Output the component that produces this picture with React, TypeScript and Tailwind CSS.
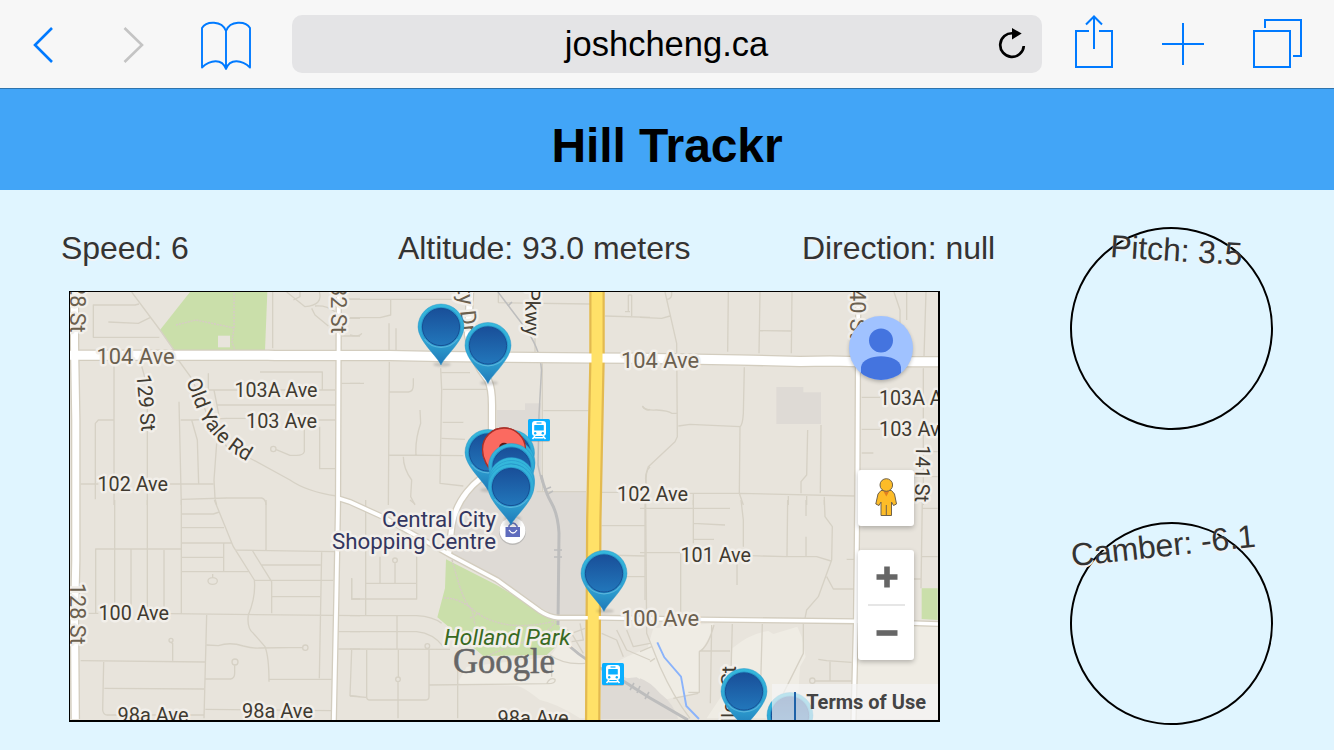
import React from "react";

/* ---------- Browser toolbar ---------- */

function Toolbar() {
  return (
    <div className="flex h-[89px] items-start border-b border-[#2f74ad] bg-[#f7f7f7]">
      <svg className="h-[88px] w-[292px] shrink-0" viewBox="0 0 292 88" fill="none">
        <path d="M52 28 L35 45 L52 62" stroke="#007aff" strokeWidth="2.6" />
        <path d="M124.500 28 L142 45 L124.500 62" stroke="#c4c4c4" strokeWidth="2.6" />
        <path
          d="M226 69 V31 C222 20 206 21 202 28 V67.500 C210 60 222 58 226 69 C230 58 242 60 250 67.500 V28 C246 21 230 20 226 31"
          stroke="#007aff"
          strokeWidth="1.9"
          strokeLinejoin="round"
        />
      </svg>
      <div className="mt-[15px] flex h-[58px] w-[750px] shrink-0 items-center rounded-[10px] bg-[#e4e4e6]">
        <div className="w-[52px]" />
        <div className="flex-1 pl-[1px] text-center text-[34.500px] leading-[58px] text-black">joshcheng.ca</div>
        <svg className="h-[58px] w-[54px]" viewBox="988 15 54 58" fill="none">
          <path d="M1023.800 46 A11.800 11.800 0 1 1 1013 33.300" stroke="#000" strokeWidth="2.700" />
          <path d="M1012 28 L1021.700 33.500 L1012 39.500 Z" fill="#000" />
        </svg>
      </div>
      <svg className="h-[88px] w-[292px] shrink-0" viewBox="1042 0 292 88" fill="none" stroke="#007aff" strokeWidth="2">
        <path d="M1089 31 H1076 V67 H1112 V31 H1099 M1094 49 V17 M1086 24.500 L1094 16.500 L1102 24.500" />
        <path d="M1162 44 H1204 M1183 23 V65" />
        <path d="M1254 31 H1290 V67 H1254 Z M1265 28 V20 H1301 V56 H1293" />
      </svg>
    </div>
  );
}

/* ---------- Map data, one entry per tile, in tile units (3 per pixel) ---------- */

type Tile = { x: number; y: number; areas: [string, string][]; roads: string };

const BUILT = "#dedad5";
const LIGHT = "#efece4";
const PARK = "#cadfaa";

const tiles: Tile[] = [
  {
    x: 60, y: 280,
    areas: [
      [PARK, "M390 36 H622 L615 212 H342 L300 150 Z"],
      ["#e8e4dc", "M474 167 H510 V202 H474 Z"],
    ],
    roads:
      "M215 36 L300 150 L345 215 M355 240 L395 295 L440 400 L500 500 L580 540 L690 600 Q740 635 830 648 M237 72 L225 75 H100 V172 H298 M145 126 L235 130 L270 113 M638 36 V205 M680 36 L735 80 Q790 75 778 36 M700 60 L720 50 V36 M755 85 L765 105 L805 138 M765 78 Q800 75 825 95 M845 57 H900 M840 115 H900 M845 168 H900 M845 310 H900 M162 245 V675 M240 240 L262 320 V675 M600 276 H787 V330 M440 330 H825 M445 280 V330 M462 330 L478 412 M470 375 H825 M362 420 H400 L500 415 H560 M770 420 H825 M357 365 L364 675 M395 420 L412 480 L416 612 M470 490 L462 600 L465 655 L470 675 M733 440 V515 Q730 526 710 526 H690 L647 508 M632 507 a8 8 0 1 0 16 0 a8 8 0 1 0 -16 0 M779 440 V566 H825 M160 420 H115 L106 430 V658 M62 612 H115 M330 612 H460 M365 658 L500 654 H605 Q618 658 618 675",
  },
  {
    x: 350, y: 280,
    areas: [[BUILT, "M440 390 H525 V370 H573 V635 H708 V675 H320 L400 580 L440 540 Z"]],
    roads:
      "M0 58 H320 M0 113 H90 L122 105 V58 M445 68 L720 72 M445 36 V68 M0 165 Q30 172 35 160 M117 130 V210 M138 145 V210 M555 170 V220 M835 45 V95 M845 45 H835 M845 45 V108 M825 95 H840 M765 108 L900 112 M118 245 L115 675 M0 310 H42 M118 336 H175 Q190 335 190 315 V295 M272 265 L275 330 L270 610 L340 618 M275 278 H360 M278 328 H415 M278 427 H340 M275 475 L345 478 M117 525 L340 527 M210 390 L212 430 Q195 480 198 525 M160 530 Q160 565 185 600 L182 650 L195 675 M577 250 V635 M580 392 H715 M560 635 H708 M755 637 H805 M877 378 Q890 395 900 388 M900 560 Q880 580 890 620",
  },
  {
    x: 640, y: 280,
    areas: [[BUILT, "M409 321 H490 V337 H543 V432 H409 Z"]],
    roads:
      "M75 36 L110 190 L112 470 L105 485 L25 560 Q18 575 18 610 M95 36 Q97 58 80 58 M0 112 L65 115 L90 108 M265 36 L263 215 M360 36 L357 220 M456 36 L454 220 M357 152 L454 153 M313 262 L310 400 Q308 435 300 440 L298 640 L310 675 M115 438 L150 433 L300 440 M8 380 Q15 392 50 390 Q85 392 95 400 H110 M503 450 L500 585 L483 605 V640 M543 435 L541 640 M145 640 H300 L645 648 M160 640 V675 M445 648 V675 M500 648 V675 M553 650 V675 M665 352 H720 M665 448 H720 M665 519 H700 M762 36 L780 90 V200 M800 36 V120 M858 36 L852 230 M850 265 V675 M820 590 H893 M880 515 H893",
  },
  {
    x: 60, y: 500,
    areas: [],
    roads:
      "M164 0 V338 M262 0 V338 M364 0 V340 M107 338 V147 H362 M213 147 V338 M312 150 V338 M365 42 H460 L478 36 M365 83 H492 M365 129 H515 M365 172 H492 M365 215 H565 M491 129 V215 M458 222 V233 M444 243 a14 10 0 1 0 28 0 a14 10 0 1 0 -28 0 M463 0 L520 140 L583 240 Q588 290 565 345 Q560 385 580 400 L615 440 Q627 470 627 545 M627 538 H815 M618 0 V150 M525 150 L825 155 M578 153 L635 245 V340 M605 195 H782 M785 155 L778 535 M583 241 H820 M637 290 H780 M62 340 H115 M330 341 L900 347 M440 345 L432 655 M440 435 L475 437 Q510 425 550 438 Q580 446 600 444 L727 442 M728 443 a8 8 0 1 0 16 0 a8 8 0 1 0 -16 0 M338 482 V430 L333 428 M327 421 a6 6 0 1 0 12 0 a6 6 0 1 0 -12 0 M62 482 L436 486 M437 537 H512 Q524 535 524 520 V497 M516 486 a9 9 0 1 0 18 0 a9 9 0 1 0 -18 0 M131 486 L128 630 Q130 645 142 645 H432 M133 565 L432 567 M436 628 L815 632 M835 395 H900 M835 447 H900 M875 235 V297 H900 M875 450 L870 587 L900 590",
  },
  {
    x: 350, y: 500,
    areas: [
      [BUILT, "M340 0 H708 V350 H620 L440 250 L298 160 L305 60 Z"],
      [LIGHT, "M325 545 L350 500 L600 470 L640 415 L705 470 V655 H690 Q620 610 570 600 Q520 560 500 557 L330 552 Z"],
      [PARK, "M288 178 L440 255 L600 350 L625 365 L640 420 L590 465 L400 468 L262 352 L285 265 Z"],
      [LIGHT, "M770 500 L830 470 L900 440 V560 L840 540 Z"],
      [BUILT, "M752 500 L830 535 L860 532 L900 555 V657 H752 Z"],
    ],
    roads:
      "M5 235 V297 H200 V170 M47 0 V345 M90 170 V250 M135 190 V250 M47 250 H200 M128 181 a7 7 0 1 0 14 0 a7 7 0 1 0 -14 0 M180 0 L195 12 M0 347 H200 Q250 350 275 370 M0 395 H200 Q250 400 280 440 M0 447 L300 448 M141 348 V447 M145 530 V447 M137 538 a7 7 0 1 0 14 0 a7 7 0 1 0 -14 0 M144 545 V655 M50 448 V590 Q50 600 60 600 H225 Q237 600 237 590 V450 M0 588 L48 592 M323 495 V655 M237 555 L590 551 Q600 530 615 538 Q618 552 590 551 M605 530 V490 M225 438 a7 7 0 1 0 14 0 a7 7 0 1 0 -14 0 M755 77 H885 M755 165 L885 168 M885 0 V300 M755 230 H885 M640 380 L665 400 L700 460 M665 400 L705 385 M690 370 L700 420 L665 425 M800 390 L830 450 L900 480 M755 400 L800 420 L820 470 M830 390 L850 440 L900 430 M600 465 Q640 495 705 490",
  },
  {
    x: 640, y: 500,
    areas: [
      [LIGHT, "M40 385 L222 370 Q205 430 178 455 V575 L70 600 L25 570 L0 520 Z"],
      [LIGHT, "M277 445 Q330 400 385 393 L400 402 L472 380 L485 410 L497 470 L480 500 L470 655 H200 L270 550 Z"],
      [LIGHT, "M652 372 L893 378 V657 H645 Z"],
      [PARK, "M845 265 H893 V360 L845 357 Z"],
      [BUILT, "M0 535 Q30 545 60 580 Q100 610 115 657 H0 Z"],
    ],
    roads:
      "M0 25 H270 M160 0 V130 M160 70 L255 75 M160 118 H222 M17 0 L20 400 L60 500 Q100 590 150 655 M0 158 H120 M330 167 L440 170 H530 L573 183 M122 160 V335 M291 190 V255 M303 0 L310 60 V140 M443 0 L441 168 M498 0 V48 M498 110 V168 M553 0 L555 50 L577 80 L575 180 L535 290 L500 330 L495 355 M560 230 L580 267 H645 M620 178 H645 M215 375 L211 610 M277 372 L273 520 M367 372 L362 550 M490 372 V460 L430 580 M178 453 H270 M222 375 Q205 440 178 455 V577 H145 M100 595 L175 580 M0 455 L35 440 M30 485 L45 475 M535 478 L560 482 L635 487 M570 485 V543 M525 543 H638 M509 542 a8 8 0 1 0 16 0 a8 8 0 1 0 -16 0 M822 237 H843 M847 0 L843 265 M845 25 H893 M845 170 H893",
  },
];

const mainRoads: [string, number][] = [
  ["M70 355.300 H268 L275 355.500 H390 L440 356.500 L590 358 L640 358.300 L740 360 L800 361.500 L830 361 L860 361.800 H938", 9],
  ["M74.500 292 V345 L75.800 420 V560 L74.500 620 L75.300 719", 7],
  ["M338.800 292 L338 505 L336.300 600 L333.800 720", 3.8],
  ["M858.300 292 L857.300 500 L856 620 L853.500 720", 3.8],
  ["M337.500 498 L350 502 L383 517 L450 555 L497 580 L540 611 Q549 617 558 617.700 H600 L700 619.500 L857 621.300 L938 624", 3.6],
  ["M470 292 L468 335 Q472 360 488 380 Q492 388 492 405 V440", 6],
  ["M494 470 C474 480 456 500 452 525 L448.500 555", 5],
];

const highway = "M597 292 V360 L593.800 520 L592.700 720";

/* ---------- Map symbols ---------- */

function Pin({ x, y }: { x: number; y: number }) {
  return (
    <g transform={`translate(${x} ${y})`}>
      <ellipse cx="1" cy="37.500" rx="9" ry="2.200" fill="#555" opacity=".22" filter="url(#pinShadow)" />
      <path
        d="M0 38 C-3 30 -23 14 -23 0 A23 23 0 0 1 23 0 C23 14 3 30 0 38 Z"
        fill="url(#pinShell)"
        stroke="#2591c9"
        strokeOpacity=".55"
        strokeWidth=".8"
      />
      <circle r="20" fill="#2794ca" />
      <circle r="18.600" fill="url(#pinFace)" stroke="#174f94" strokeWidth="1" />
      <path d="M-16.500 12 A20.500 20.500 0 0 0 16.500 12" fill="none" stroke="#58b4dc" strokeWidth="1.200" />
    </g>
  );
}

function RedPin({ x, y }: { x: number; y: number }) {
  return (
    <g transform={`translate(${x} ${y})`}>
      <path d="M0 45 C-3 28 -21.500 18 -21.500 0 A21.500 21.500 0 0 1 21.500 0 C21.500 18 3 28 0 45 Z" fill="#fb6a60" stroke="#a93029" strokeWidth="1.300" />
      <circle cy="-1.800" r="5" fill="#5d1714" />
    </g>
  );
}

function Station({ x, y }: { x: number; y: number }) {
  return (
    <g transform={`translate(${x} ${y})`}>
      <rect x="-11" y="-10" width="22" height="22" rx="2" fill="#777" opacity=".3" />
      <rect x="-11" y="-11" width="22" height="22" rx="1.500" fill="#0aafff" />
      <rect x="-7" y="-9" width="14" height="15" rx="3" fill="#fff" />
      <path d="M-2.500 -7 H2.500" stroke="#0aafff" strokeWidth="1.200" />
      <rect x="-4.800" y="-5" width="9.600" height="5.500" rx=".6" fill="#0aafff" />
      <circle cx="-3.800" cy="3.300" r="1.200" fill="#0aafff" />
      <circle cx="3.800" cy="3.300" r="1.200" fill="#0aafff" />
      <path d="M-4 6 L-6.500 9 M4 6 L6.500 9 M-4.500 7.700 H4.500" stroke="#fff" strokeWidth="1.500" />
    </g>
  );
}

type LabelProps = { x: number; y: number; w: number; size?: number; r?: number; fill?: string; italic?: boolean; children: string };

function Label({ x, y, w, size = 20.5, r = 0, fill = "#403a30", italic, children }: LabelProps) {
  return (
    <text
      transform={`translate(${x} ${y}) rotate(${r})`}
      fontSize={size}
      textLength={w}
      lengthAdjust="spacingAndGlyphs"
      fill={fill}
      fontStyle={italic ? "italic" : "normal"}
      stroke="#f2efea"
      strokeWidth="5"
      strokeLinejoin="round"
      paintOrder="stroke"
    >
      {children}
    </text>
  );
}

const MAJOR = "#6b604f";

function MapCanvas() {
  return (
    <svg className="block h-[429px] w-[868px] font-['Roboto',sans-serif]" viewBox="70 292 868 429">
      <defs>
        <linearGradient id="pinShell" x1="0" y1="0" x2="0" y2="1">
          <stop offset="0" stopColor="#35b9dc" />
          <stop offset=".6" stopColor="#2fa3d2" />
          <stop offset="1" stopColor="#1f78b8" />
        </linearGradient>
        <linearGradient id="pinFace" x1="0" y1="0" x2="0" y2="1">
          <stop offset="0" stopColor="#194f99" />
          <stop offset="1" stopColor="#2277bb" />
        </linearGradient>
        <filter id="pinShadow" x="-50%" y="-100%" width="200%" height="300%">
          <feGaussianBlur stdDeviation="1" />
        </filter>
      </defs>
      <rect x="70" y="292" width="868" height="429" fill="#e8e4dc" />
      {tiles.map((t, i) => (
        <g key={i} transform={`translate(${t.x} ${t.y}) scale(.33333)`}>
          {t.areas.map(([fill, d], j) => (
            <path key={j} d={d} fill={fill} />
          ))}
        </g>
      ))}
      {tiles.map((t, i) => (
        <g key={i} transform={`translate(${t.x} ${t.y}) scale(.33333)`}>
          <path d={t.roads} fill="none" stroke="#d6d1c5" strokeWidth="4" strokeLinejoin="round" />
        </g>
      ))}
      <path
        d="M176 325 L196 320 L215 324 L234 328 M234 293 V328 L232 342 L235 350 M452 560 C458 580 462 600 472 610 L475 625 M444 598 C455 598 465 602 477 613 C495 625 520 630 555 621 M470 618 L480 613 M555 622 C545 640 505 645 480 660"
        fill="none" stroke="#d6cbc5" strokeWidth="1.400" strokeDasharray="2 1"
      />
      <path d="M657.300 642.300 L664.300 657.300 L681 676.700 L686.300 706 L699 719" fill="none" stroke="#8ab3fb" strokeWidth="1.900" />
      <g fill="none" stroke="#bdbdbd">
        <path d="M498 292 L523 325 Q540 347 541.500 370 L539 415 L538 465 Q541 482 547 492" strokeWidth="1.500" />
        <path d="M541 475 Q545 492 552 504 Q558 515 559 533 L558 625 M568 645 Q588 663 617 677 L650 698 L688 720" strokeWidth="3" />
        <path d="M508 306 L512 302 M546 495 L553 491 M544 490 L551 487 M554 550 H562 M554 557 H562 M630 690 L634 683 M645 699 L649 692 M637 693 L640 686" strokeWidth="1.600" />
      </g>
      <g fill="none" stroke="#d3cdbf">
        {mainRoads.map(([d, w], i) => (
          <path key={i} d={d} strokeWidth={w + 2.6} />
        ))}
      </g>
      <path d={highway} fill="none" stroke="#e3ba50" strokeWidth="15.500" />
      <g fill="none" stroke="#fff" strokeLinejoin="round">
        {mainRoads.map(([d, w], i) => (
          <path key={i} d={d} strokeWidth={w} />
        ))}
      </g>
      <path d={highway} fill="none" stroke="#ffe168" strokeWidth="11" />

      <Label x={96.5} y={364} w={78} size={22} fill={MAJOR}>104 Ave</Label>
      <Label x={621} y={367.5} w={78} size={22} fill={MAJOR}>104 Ave</Label>
      <Label x={621} y={626} w={78} size={22} fill={MAJOR}>100 Ave</Label>
      <Label x={234.5} y={397.3} w={83}>103A Ave</Label>
      <Label x={246} y={428.3} w={71}>103 Ave</Label>
      <Label x={97.5} y={491.300} w={70.500}>102 Ave</Label>
      <Label x={617} y={501} w={71}>102 Ave</Label>
      <Label x={680.500} y={562} w={70.500}>101 Ave</Label>
      <Label x={98.500} y={620.300} w={70.500}>100 Ave</Label>
      <Label x={117.500} y={722} w={71}>98a Ave</Label>
      <Label x={242} y={717.500} w={71}>98a Ave</Label>
      <Label x={497.500} y={724.500} w={71}>98a Ave</Label>
      <Label x={879} y={405.300} w={83}>103A Ave</Label>
      <Label x={879} y={436.300} w={71}>103 Ave</Label>
      <Label x={69.500} y={271} w={61.500} r={90} size={22} fill={MAJOR}>128 St</Label>
      <Label x={69.500} y={583} w={61.500} r={90} size={22} fill={MAJOR}>128 St</Label>
      <Label x={330.500} y={272} w={61.500} r={90} size={22} fill={MAJOR}>132 St</Label>
      <Label x={850} y={277} w={61.500} r={90} size={22} fill={MAJOR}>140 St</Label>
      <Label x={455.500} y={268} w={65.500} r={84} size={22} fill={MAJOR}>City Dr</Label>
      <Label x={526.500} y={248} w={88} r={91} size={20.500}>City Pkwy</Label>
      <Label x={136.500} y={375} w={57} r={85} size={20.500}>129 St</Label>
      <Label x={916} y={445} w={57} r={91} size={20.500}>141 St</Label>
      <Label x={736} y={766} w={100} r={-90} size={19.500}>Whalley St</Label>
      <path id="oldYale" d="M186 381 L196 407 Q206 434 236 455 L268 474" fill="none" />
      <text fontSize="20.500" fill="#403a30" stroke="#f2efea" strokeWidth="5" strokeLinejoin="round" paintOrder="stroke">
        <textPath href="#oldYale" textLength="104">Old Yale Rd</textPath>
      </text>
      <Label x={382} y={526.700} w={114} size={21.500} fill="#33365f">Central City</Label>
      <Label x={332} y={548.500} w={164} size={21.500} fill="#33365f">Shopping Centre</Label>
      <Label x={444} y={644.500} w={126.500} size={22.500} fill="#386a22" italic>Holland Park</Label>
      <text x="453" y="672.500" fontSize="35" textLength="102" lengthAdjust="spacingAndGlyphs" fill="#666" stroke="#666" strokeWidth=".5" fontFamily="'Liberation Serif',serif">Google</text>

      <Station x={539} y={430} />
      <Station x={613} y={674} />
      <circle cx="512.500" cy="531.500" r="13.500" fill="#999" opacity=".5" />
      <circle cx="512.500" cy="530.500" r="13" fill="#fff" />
      <path d="M505.500 527 H520 V537 H505.500 Z" fill="#5f6cbd" />
      <path d="M509 528 V526 Q513 520 517 526 V528" fill="none" stroke="#5f6cbd" strokeWidth="1.500" />
      <path d="M509 530 Q513 536 517 530" fill="none" stroke="#fff" strokeWidth="1.300" />

      <Pin x={441} y={327} />
      <Pin x={488} y={345.500} />
      <Pin x={488} y={452.500} />
      <Pin x={511.500} y={453} />
      <RedPin x={504} y={449.500} />
      <Pin x={512} y={463} />
      <RedPin x={504} y={449.500} />
      <Pin x={511.500} y={466.500} />
      <Pin x={511.500} y={480.500} />
      <Pin x={511.500} y={483.500} />
      <Pin x={511} y={487} />
      <Pin x={604} y={573.500} />
      <Pin x={744} y={691.500} />
      <Pin x={790} y={715.500} />
    </svg>
  );
}

/* ---------- Map controls ---------- */

function MapControls() {
  return (
    <>
      <svg className="absolute left-[775px] top-[20px] h-[76px] w-[72px]" viewBox="845 312 72 76">
        <defs>
          <clipPath id="avatar"><circle cx="881" cy="348" r="32" /></clipPath>
          <filter id="soft" x="-30%" y="-30%" width="160%" height="160%"><feGaussianBlur stdDeviation="2" /></filter>
        </defs>
        <circle cx="881" cy="350" r="31.500" fill="#000" opacity=".28" filter="url(#soft)" />
        <circle cx="881" cy="348" r="32" fill="#a0c2ff" />
        <g clipPath="url(#avatar)" fill="#4474df">
          <circle cx="881" cy="340.500" r="12" />
          <path d="M861 385 V367 C863 352.500 899 352.500 901 367 V385 Z" />
        </g>
      </svg>
      <div className="absolute left-[788px] top-[178px] flex h-[56px] w-[56px] items-center justify-center rounded-[3px] bg-white pb-[3px] shadow-[0_2px_5px_rgba(0,0,0,0.25)]">
        <svg className="h-[40px] w-[26px]" viewBox="0 0 26 40">
          <path d="M8 13.500 H18.500 L21.500 17 L23.500 27 L20.500 28.500 L18.500 25 V38.500 H8 V25 L6 28.500 L2.800 27 L5 17 Z" fill="#fdbc28" stroke="#70624a" strokeWidth="1" />
          <path d="M13.300 28 V38.500" stroke="#70624a" strokeWidth="1" />
          <path d="M10 13.500 H16.600 L13.300 19.500 Z" fill="#e0801e" />
          <circle cx="13.300" cy="8" r="6.300" fill="#fdbc28" stroke="#70624a" strokeWidth="1" />
        </svg>
      </div>
      <div className="absolute left-[788px] top-[258px] flex h-[110px] w-[56px] flex-col items-center rounded-[3px] bg-white shadow-[0_2px_5px_rgba(0,0,0,0.25)]">
        <svg className="h-[54px] w-[56px]" viewBox="0 0 56 54"><path d="M18.500 27 H39.500 M29 16.500 V37.500" stroke="#666" strokeWidth="5.600" /></svg>
        <div className="h-[2px] w-[37px] bg-[#e6e6e6]" />
        <svg className="h-[54px] w-[56px]" viewBox="0 0 56 54"><path d="M18.500 27 H39.500" stroke="#666" strokeWidth="5.600" /></svg>
      </div>
      <div className="absolute bottom-0 right-0 flex h-[36px] w-[166px] items-center justify-end bg-[#f5f5f5]/70 pr-[12px] font-['Roboto',sans-serif] text-[20px] font-bold text-[#444]">
        <div className="absolute bottom-0 left-[22px] h-[28px] w-[2px] bg-[#1f62a8]" />
        Terms of Use
      </div>
    </>
  );
}

/* ---------- Gauges ---------- */

function Gauge({ label, rotation }: { label: string; rotation: number }) {
  return (
    <div
      className="flex h-[203px] w-[203px] justify-center rounded-full border-2 border-black text-[32px] leading-[42px] tracking-[-0.12px] whitespace-nowrap text-[#333] [text-shadow:0_2px_0_#f3f3f3]"
      style={{ transform: `rotate(${rotation}deg)` }}
    >
      {label}
    </div>
  );
}

export default function App() {
  return (
    <div className="h-[750px] w-[1334px] overflow-hidden bg-[#e0f5ff] font-['Liberation_Sans',Arial,sans-serif]">
      <Toolbar />
      <header className="flex h-[101px] items-center justify-center bg-[#42a5f7] pt-[12px]">
        <h1 className="text-[48px] leading-none font-bold tracking-[-0.1px] text-black">Hill Trackr</h1>
      </header>
      <main className="flex">
        <section className="ml-[61px] w-[1009px] pt-[37px]">
          <div className="flex h-[42px] text-[32px] leading-[42px] tracking-[-0.05px] whitespace-nowrap text-[#333] [text-shadow:0_2px_0_#f3f3f3]">
            <div className="w-[337px]">Speed: 6</div>
            <div className="w-[404px]">Altitude: 93.0 meters</div>
            <div>Direction: null</div>
          </div>
          <div className="relative mt-[22px] ml-[8px] h-[431px] w-[871px] overflow-hidden border-t border-r-2 border-b-2 border-l border-black">
            <MapCanvas />
            <MapControls />
          </div>
        </section>
        <aside className="flex flex-col gap-[92px] pt-[37px]">
          <Gauge label="Pitch: 3.5" rotation={3.5} />
          <Gauge label="Camber: -6.1" rotation={-6.1} />
        </aside>
      </main>
    </div>
  );
}
